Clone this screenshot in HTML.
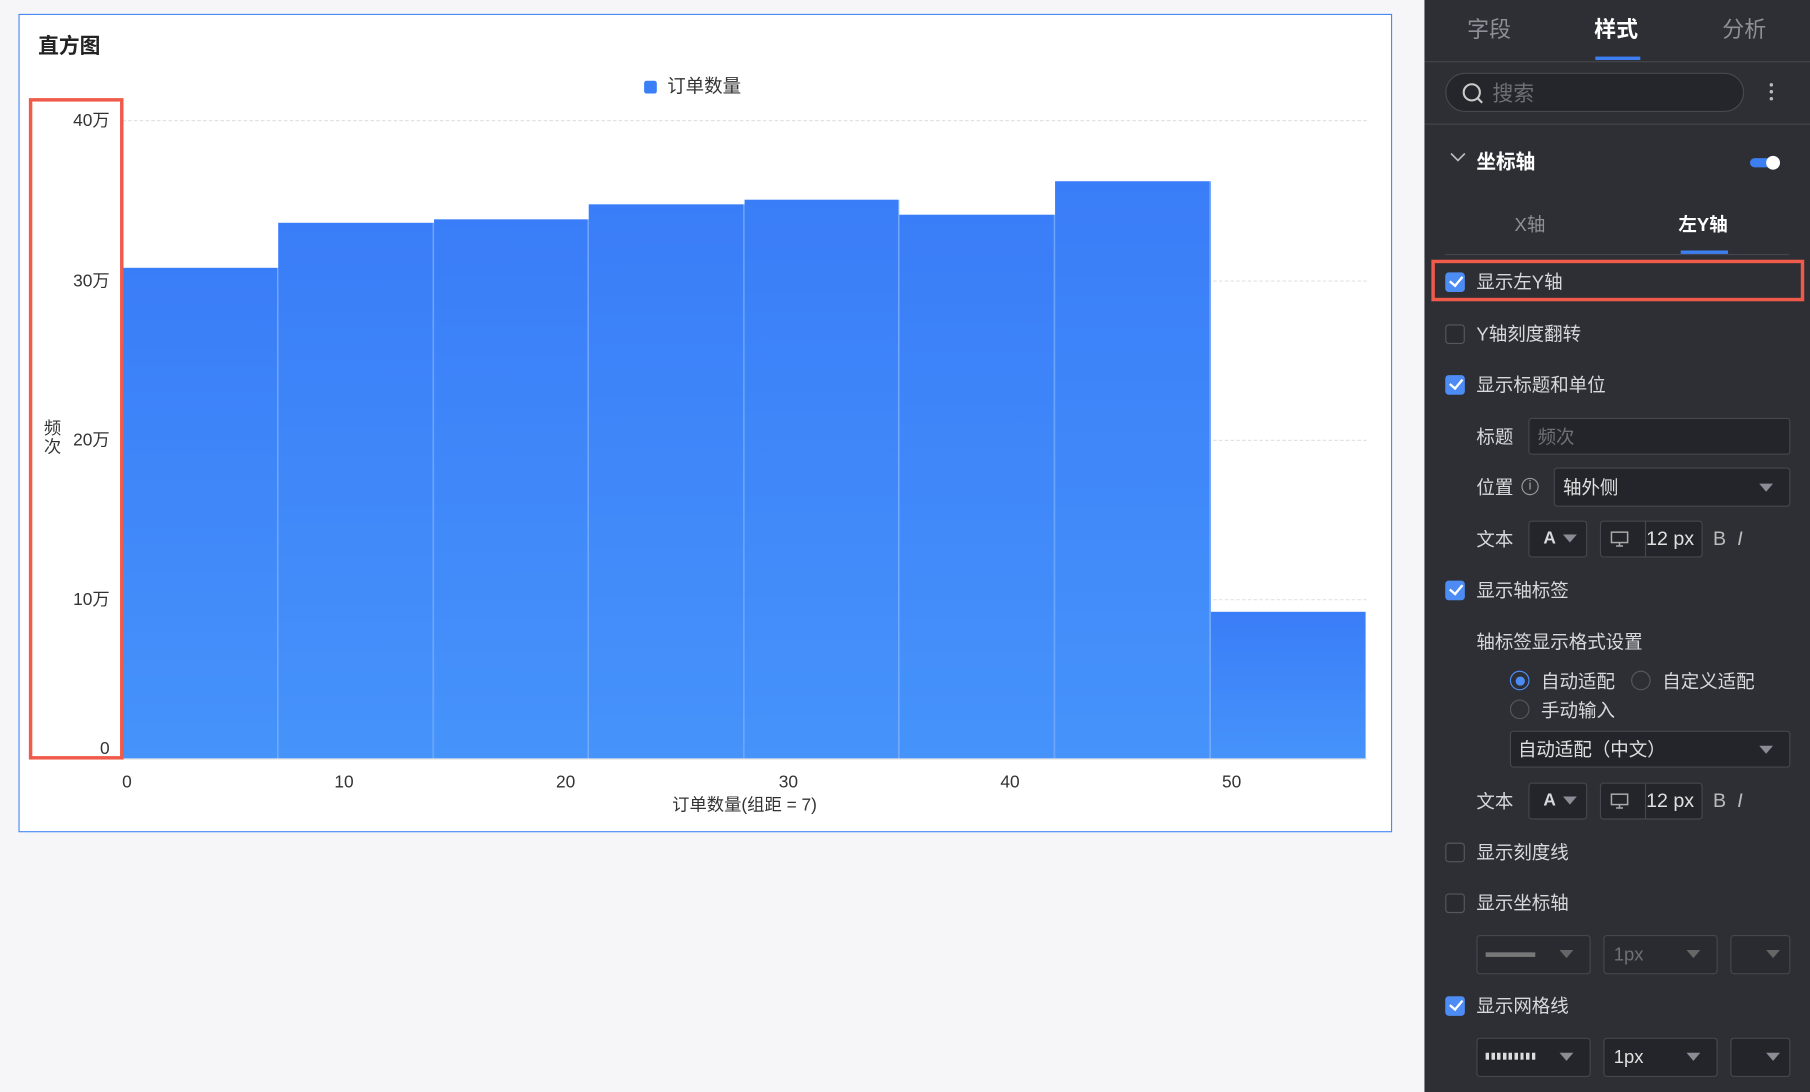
<!DOCTYPE html>
<html><head><meta charset="utf-8"><style>
*{margin:0;padding:0;box-sizing:border-box}
html,body{width:1810px;height:1092px;overflow:hidden;background:#f6f6f8}
#w{width:1568px;height:946px;transform:scale(1.15434);transform-origin:0 0;position:relative;font-family:"Liberation Sans","Noto Sans CJK SC",sans-serif;background:#f6f6f8;line-height:1.6}
.a{position:absolute;white-space:nowrap}
.card{position:absolute;left:16px;top:12px;width:1190px;height:709px;background:#fff;border:1.5px solid #4a8af4}
.bar{position:absolute;background:linear-gradient(#3a7df8,#4693fb);border-right:1px solid #6aa4fb}
.grid{position:absolute;left:106px;width:1078px;border-top:1px dashed #e2e2e6}
.yl{position:absolute;right:1473px;font-size:15px;color:#333;text-align:right}
.xl{position:absolute;top:666px;font-size:15px;color:#333;transform:translateX(-50%)}
.panel{position:absolute;left:1234px;top:0;width:334px;height:946px;background:#2e2f35;color:#d8d9dc;font-size:16px}
.cb{position:absolute;left:18px;width:17px;height:17px;border-radius:3px;border:1px solid #55575e;background:#2a2b30}
.cb.on{background:#4d8cf5;border-color:#4d8cf5}
.cb.on:after{content:"";position:absolute;left:5px;top:0px;width:5px;height:9px;border:solid #fff;border-width:0 2.5px 2.5px 0;transform:rotate(40deg)}
.box{position:absolute;background:#24252a;border:1px solid #45474e;border-radius:3px}
.tri{position:absolute;width:0;height:0;border-left:6px solid transparent;border-right:6px solid transparent;border-top:7px solid #8a8d96}
.rd{position:absolute;width:17px;height:17px;border-radius:50%;border:1px solid #55575e}
</style></head><body><div id="w">
<div class="card"></div>
<div class="a" style="left:33px;top:26px;font-size:18px;font-weight:bold;color:#222">直方图</div>
<div class="a" style="left:558px;top:70px;width:11px;height:11px;border-radius:2px;background:#3a7ef8"></div>
<div class="a" style="left:578px;top:63px;font-size:16px;color:#333">订单数量</div>
<div class="grid" style="top:104px"></div><div class="grid" style="top:243px"></div><div class="grid" style="top:381px"></div><div class="grid" style="top:519px"></div>
<div class="bar" style="left:106px;top:232px;width:135px;height:425px"></div>
<div class="bar" style="left:241px;top:193px;width:135px;height:464px"></div>
<div class="bar" style="left:376px;top:190px;width:134px;height:467px"></div>
<div class="bar" style="left:510px;top:177px;width:135px;height:480px"></div>
<div class="bar" style="left:645px;top:173px;width:134px;height:484px"></div>
<div class="bar" style="left:779px;top:186px;width:135px;height:471px"></div>
<div class="bar" style="left:914px;top:157px;width:135px;height:500px"></div>
<div class="bar" style="left:1049px;top:530px;width:134px;height:127px;border-right:none"></div>
<div class="a" style="left:106px;top:657px;width:1078px;border-top:1px solid #ddd"></div>
<div class="yl" style="top:93px">40万</div><div class="yl" style="top:232px">30万</div><div class="yl" style="top:370px">20万</div><div class="yl" style="top:508px">10万</div><div class="yl" style="top:637px">0</div>
<div class="a" style="left:38px;top:364px;font-size:15px;color:#333;line-height:16px;width:16px;white-space:normal">频次</div>
<div class="xl" style="left:110px">0</div><div class="xl" style="left:298px">10</div><div class="xl" style="left:490px">20</div><div class="xl" style="left:683px">30</div><div class="xl" style="left:875px">40</div><div class="xl" style="left:1067px">50</div>
<div class="a" style="left:645px;top:686px;transform:translateX(-50%);font-size:15px;color:#333">订单数量(组距 = 7)</div>
<div class="a" style="left:25px;top:85px;width:82px;height:573px;border:3px solid #f05a4a"></div>

<div class="panel">
<div class="a" style="left:37px;top:12px;font-size:19px;color:#8e9097">字段</div>
<div class="a" style="left:147px;top:12px;font-size:19px;color:#fff;font-weight:bold">样式</div>
<div class="a" style="left:258px;top:12px;font-size:19px;color:#8e9097">分析</div>
<div class="a" style="left:148px;top:49px;width:39px;height:3px;background:#3d7ef0"></div>
<div class="a" style="left:0;top:53px;width:334px;border-top:1px solid #44464d"></div>
<div class="a" style="left:18px;top:63px;width:259px;height:34px;border-radius:17px;background:#25262b;border:1px solid #47494f"></div>
<svg class="a" style="left:32px;top:71px" width="20" height="20"><circle cx="9" cy="9" r="7" fill="none" stroke="#ccc" stroke-width="1.8"/><path d="M14 14l4 4" stroke="#ccc" stroke-width="1.8"/></svg>
<div class="a" style="left:59px;top:67px;font-size:18px;color:#6e7077">搜索</div>
<div class="a" style="left:299px;top:72px;width:3px;height:3px;border-radius:50%;background:#bbb;box-shadow:0 6px #bbb,0 12px #bbb"></div>
<div class="a" style="left:0;top:107px;width:334px;border-top:1px solid #44464d"></div>
<svg class="a" style="left:22px;top:132px" width="14" height="10"><path d="M1 1l6 6 6-6" fill="none" stroke="#bbb" stroke-width="1.5"/></svg>
<div class="a" style="left:45px;top:127px;font-size:17px;color:#fff;font-weight:bold">坐标轴</div>
<div class="a" style="left:282px;top:137px;width:26px;height:8px;border-radius:4px;background:#3d7ef0"></div>
<div class="a" style="left:296px;top:135px;width:12px;height:12px;border-radius:50%;background:#fff"></div>
<div class="a" style="left:78px;top:183px;font-size:16px;color:#8e9097">X轴</div>
<div class="a" style="left:220px;top:183px;font-size:16px;color:#fff;font-weight:bold">左Y轴</div>
<div class="a" style="left:222px;top:217px;width:41px;height:3px;background:#3d7ef0"></div>
<div class="a" style="left:18px;top:220px;width:298px;border-top:1px solid #44464d"></div>
<div class="a" style="left:6px;top:225px;width:323px;height:36px;border:3px solid #f05a4a"></div>
<div class="cb on" style="top:236px"></div><div class="a" style="left:45px;top:233px">显示左Y轴</div>
<div class="cb" style="top:281px"></div><div class="a" style="left:45px;top:278px">Y轴刻度翻转</div>
<div class="cb on" style="top:325px"></div><div class="a" style="left:45px;top:322px">显示标题和单位</div>
<div class="a" style="left:45px;top:367px">标题</div>
<div class="box" style="left:90px;top:362px;width:227px;height:32px"></div><div class="a" style="left:98px;top:367px;color:#6e7077">频次</div>
<div class="a" style="left:45px;top:411px">位置</div>
<div class="a" style="left:84px;top:414px;width:15px;height:15px;border-radius:50%;border:1px solid #999;font-size:11px;text-align:center;line-height:13px;color:#aaa">i</div>
<div class="box" style="left:112px;top:405px;width:205px;height:34px"></div><div class="a" style="left:120px;top:411px;color:#e0e0e0">轴外侧</div><div class="tri" style="left:290px;top:419px"></div>
<div class="a" style="left:45px;top:456px">文本</div>
<div class="box" style="left:90px;top:451px;width:51px;height:32px"></div><div class="a" style="left:103px;top:455px;font-weight:bold;font-size:15px">A</div><div class="tri" style="left:120px;top:463px"></div>
<div class="box" style="left:152px;top:451px;width:89px;height:32px"></div><div class="a" style="left:191px;top:451px;height:32px;border-left:1px solid #45474e"></div>
<svg class="a" style="left:161px;top:460px" width="16" height="14"><rect x="1" y="1" width="14" height="9" fill="none" stroke="#aaa" stroke-width="1.3"/><path d="M5 13h6M8 10v3" stroke="#aaa" stroke-width="1.3"/></svg>
<div class="a" style="left:192px;top:453px;font-size:17px;color:#e0e0e0">12 px</div>
<div class="a" style="left:250px;top:453px;font-size:17px;color:#bbb">B</div><div class="a" style="left:271px;top:453px;font-size:17px;color:#bbb;font-style:italic">I</div>
<div class="cb on" style="top:503px"></div><div class="a" style="left:45px;top:500px">显示轴标签</div>
<div class="a" style="left:45px;top:545px">轴标签显示格式设置</div>
<div class="rd" style="left:74px;top:581px;border:1.5px solid #4d8cf5"></div><div class="a" style="left:78.5px;top:585.5px;width:8px;height:8px;border-radius:50%;background:#4d8cf5"></div>
<div class="a" style="left:101px;top:579px">自动适配</div>
<div class="rd" style="left:179px;top:581px"></div><div class="a" style="left:206px;top:579px">自定义适配</div>
<div class="rd" style="left:74px;top:606px"></div><div class="a" style="left:101px;top:604px">手动输入</div>
<div class="box" style="left:74px;top:633px;width:243px;height:32px"></div><div class="a" style="left:81px;top:638px;color:#e0e0e0">自动适配（中文）</div><div class="tri" style="left:290px;top:646px"></div>
<div class="a" style="left:45px;top:683px">文本</div>
<div class="box" style="left:90px;top:678px;width:51px;height:32px"></div><div class="a" style="left:103px;top:682px;font-weight:bold;font-size:15px">A</div><div class="tri" style="left:120px;top:690px"></div>
<div class="box" style="left:152px;top:678px;width:89px;height:32px"></div><div class="a" style="left:191px;top:678px;height:32px;border-left:1px solid #45474e"></div>
<svg class="a" style="left:161px;top:687px" width="16" height="14"><rect x="1" y="1" width="14" height="9" fill="none" stroke="#aaa" stroke-width="1.3"/><path d="M5 13h6M8 10v3" stroke="#aaa" stroke-width="1.3"/></svg>
<div class="a" style="left:192px;top:680px;font-size:17px;color:#e0e0e0">12 px</div>
<div class="a" style="left:250px;top:680px;font-size:17px;color:#bbb">B</div><div class="a" style="left:271px;top:680px;font-size:17px;color:#bbb;font-style:italic">I</div>
<div class="cb" style="top:730px"></div><div class="a" style="left:45px;top:727px">显示刻度线</div>
<div class="cb" style="top:774px"></div><div class="a" style="left:45px;top:771px">显示坐标轴</div>
<div class="box" style="left:45px;top:810px;width:99px;height:34px;background:#2a2b30"></div><div class="a" style="left:53px;top:825px;width:43px;height:4px;background:#777"></div><div class="tri" style="left:117px;top:823px;border-top-color:#666"></div>
<div class="box" style="left:155px;top:810px;width:99px;height:34px;background:#2a2b30"></div><div class="a" style="left:164px;top:815px;color:#6e7077">1px</div><div class="tri" style="left:227px;top:823px;border-top-color:#666"></div>
<div class="box" style="left:265px;top:810px;width:52px;height:34px;background:#2a2b30"></div><div class="tri" style="left:296px;top:823px;border-top-color:#666"></div>
<div class="cb on" style="top:863px"></div><div class="a" style="left:45px;top:860px">显示网格线</div>
<div class="box" style="left:45px;top:899px;width:99px;height:34px"></div><div class="a" style="left:53px;top:912px;width:43px;height:6px;background:repeating-linear-gradient(90deg,#ddd 0 3px,transparent 3px 5px)"></div><div class="tri" style="left:117px;top:912px"></div>
<div class="box" style="left:155px;top:899px;width:99px;height:34px"></div><div class="a" style="left:164px;top:904px;color:#e0e0e0">1px</div><div class="tri" style="left:227px;top:912px"></div>
<div class="box" style="left:265px;top:899px;width:52px;height:34px"></div><div class="tri" style="left:296px;top:912px"></div>
</div>
</div></body></html>
